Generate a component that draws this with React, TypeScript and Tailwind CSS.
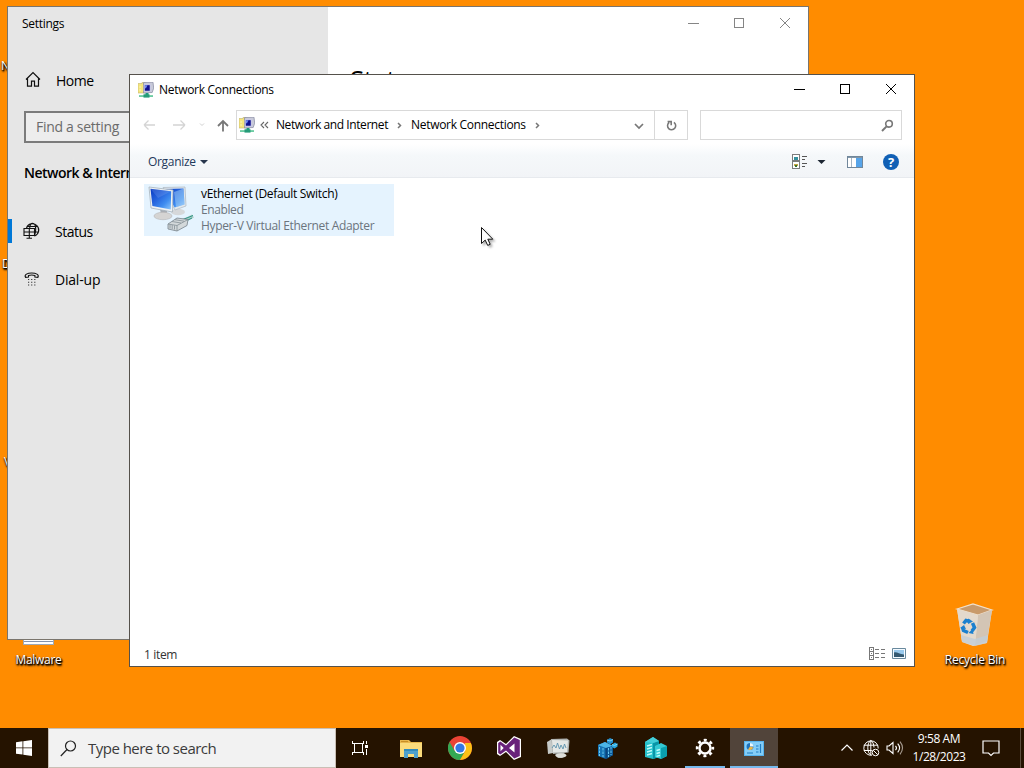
import type { ReactNode } from "react";

const NetworkIcon = () => (
  <svg width="16" height="16" viewBox="0 0 16 16" className="shrink-0">
    <path d="M0 1.500h4V.5h3v10.500H0z" fill="#f5e67c" stroke="#c0b473" strokeWidth=".6" />
    <path d="M1.500 4.500h1.200v1H1.500zM1.500 7.500h1.200v1H1.500z" fill="#fffce0" />
    <path d="M5.500.6l9.500-.4.700 6-1.500 4.300-8.700.5z" fill="#c8cad9" stroke="#84879f" strokeWidth=".7" />
    <path d="M6.300 2.700h5.900v6.500H6.300z" fill="#10108e" stroke="#eef" strokeWidth=".7" />
    <path d="M7 3.200h2.500L8 6.200H7z" fill="#6f8cf5" />
    <path d="M7.500 11h3v2h-3z" fill="#1f9c7e" />
    <path d="M1 13.300h14v1.500H1z" fill="#49c08c" />
    <path d="M5.500 12.300h6v3.300h-6z" fill="#259b78" />
  </svg>
);

const AdapterIcon = () => (
  <svg width="50" height="52" viewBox="0 0 50 52" className="shrink-0">
    <defs>
      <linearGradient id="screen" x1="0" y1="0" x2="1" y2="1">
        <stop offset="0" stopColor="#0a3cc4" />
        <stop offset=".4" stopColor="#2563dd" />
        <stop offset=".7" stopColor="#3f8df0" />
        <stop offset="1" stopColor="#8fc8fb" />
      </linearGradient>
    </defs>
    <ellipse cx="31" cy="28" rx="7" ry="3.200" fill="#d6d8da" />
    <path d="M16 3.500l22-.5 1 19-11 4z" fill="#e2e8ec" stroke="#b3bdc6" strokeWidth=".8" />
    <path d="M18 5l18.500-.5 1 16-10 3z" fill="url(#screen)" />
    <path d="M27 8l9.500-3.500 1 16-8.500 2.500z" fill="#a5d2f8" opacity=".5" />
    <path d="M13 25l7 1.500v4h-6z" fill="#a9aeb4" />
    <ellipse cx="16" cy="32" rx="9" ry="3.700" fill="#d5d4d3" stroke="#b4b4b5" strokeWidth=".6" />
    <path d="M2 3l24 3-.5 22L4 24z" fill="#eef2f5" stroke="#a6b2bd" strokeWidth=".8" />
    <path d="M3.500 4.700L24.200 7.300l-.4 18.200L5.400 22z" fill="url(#screen)" />
    <path d="M3.500 4.700L24.200 7.300 11 14z" fill="#fff" opacity=".12" />
    <path d="M34 37c5-1 9-3 12-5" stroke="#a9cfc8" strokeWidth="3.500" fill="none" />
    <path d="M36 35.500l10-4M37 38l8-4" stroke="#319486" />
    <path d="M21 40l9-6 11 1.500-1 6-10 5.500-9-2z" fill="#d3d8da" stroke="#77828a" strokeWidth=".8" />
    <path d="M21 40l9 1.500 11-6M30 41.500V47M23 40.500v4M25.200 41v4M27.500 41.500v4M25 37.500l9 1.500M28 35.700l9 1.500" stroke="#848f96" strokeWidth=".8" fill="none" />
  </svg>
);

type CaptionProps = { className: string };

const CaptionButtons = ({ className }: CaptionProps) => (
  <div className={"flex " + className}>
    <svg width="46" height="30" viewBox="0 0 46 30" fill="none" stroke="currentColor" shapeRendering="crispEdges">
      <path d="M18 15.500h11" />
    </svg>
    <svg width="46" height="30" viewBox="0 0 46 30" fill="none" stroke="currentColor" shapeRendering="crispEdges">
      <path d="M18.500 10.500h9v9h-9z" />
    </svg>
    <svg width="46" height="30" viewBox="0 0 46 30" fill="none" stroke="currentColor">
      <path d="M18 10l10 10m0-10l-10 10" />
    </svg>
  </div>
);

const HomeIcon = () => (
  <svg width="18" height="18" viewBox="0 0 18 18" fill="none" stroke="#111" strokeWidth="1.200">
    <path d="M2 8.500l7-7 7 7M3.500 7.500v7.700h4v-5h3v5h4V7.500" />
  </svg>
);

const StatusIcon = () => (
  <svg width="18" height="18" viewBox="0 0 18 18" fill="none" stroke="#111" strokeWidth="1.100">
    <path d="M3.500 6A6.300 6.300 0 1 1 11.500 14M6.700 6C7 2.800 8 1.200 9.500 1.200s3.200 2.200 3.200 6.300-.7 5-1.700 6.500M4.200 4.500h10.700M11.500 10h4" />
    <path d="M1 6.500h10.500v7H1zM3.500 16.200H9M6.300 13.500v2.700M6.300 6.500v7M1 10h10.500" />
  </svg>
);

const DialIcon = () => (
  <svg width="18" height="18" viewBox="0 0 18 18" fill="none" stroke="#111" strokeWidth="1.100">
    <path d="M2.500 7.300C1 4.500 4.500 3 8.700 3s7.700 1.500 6.200 4.300l-3-.3V5.500c-1.800-.6-4.600-.6-6.400 0V7z" />
    <path d="M5 9.500h8M5 12.300h8M5 15h8" stroke="#333" strokeDasharray="1.200 1.900" />
  </svg>
);

const Settings = () => (
  <div className="absolute left-[7px] top-[6px] w-[802px] h-[634px] border border-[#7a756d] bg-white flex overflow-hidden">
    <div className="w-80 h-full bg-[#e6e6e6] shrink-0">
      <div className="h-8 pl-[14px] pt-px leading-8 text-xs tracking-[-0.3px]">Settings</div>
      <div className="mt-[33px] h-4 pl-4 flex items-center gap-[14px] text-sm tracking-[-0.5px]">
        <HomeIcon />
        <span className="pt-px">Home</span>
      </div>
      <div className="mt-[23px] ml-4 w-[288px] h-8 border-2 border-[#7b7b7b] bg-[#ededed] pl-[10px] leading-[27px] text-sm text-[#6b6b6b] tracking-[-0.3px]">
        Find a setting
      </div>
      <div className="mt-[20px] ml-4 h-5 leading-5 text-sm font-semibold tracking-[-0.5px]">Network &amp; Internet</div>
      <div className="mt-9 h-6 flex items-center text-sm tracking-[-0.5px]">
        <span className="w-1 h-6 bg-[#0078d7] mr-[11px]" />
        <StatusIcon />
        <span className="ml-[14px] pt-0.5">Status</span>
      </div>
      <div className="mt-6 h-6 pl-[15px] flex items-center gap-[14px] text-sm tracking-[-0.2px]">
        <DialIcon />
        <span className="pt-0.5">Dial-up</span>
      </div>
    </div>
    <div className="grow">
      <div className="flex justify-end pt-px">
        <CaptionButtons className="text-[#858585]" />
      </div>
      <h1 className="mt-[23px] ml-[22px] text-[26px] leading-9 tracking-[-0.5px]">Status</h1>
    </div>
  </div>
);

const AddressBar = () => (
  <div className="mt-[5px] h-[30px] flex items-center pr-3">
    <svg width="106" height="30" viewBox="0 0 106 30" fill="none" className="shrink-0">
      <path d="M14 15h11m-11 0l4.500-4.500M14 15l4.500 4.500M43 15h12m0 0l-4.500-4.500M55 15l-4.500 4.500" stroke="#d4d4d4" strokeWidth="1.300" />
      <path d="M70 13.500l2 2 2-2" stroke="#d0d0d0" />
      <path d="M93 21.500V11m-5 5l5-5 5 5" stroke="#777" strokeWidth="1.800" />
    </svg>
    <div className="w-[452px] h-[30px] border border-[#d9d9d9] flex items-center pl-0.5 shrink-0">
      <NetworkIcon />
      <svg width="21" height="12" viewBox="0 0 21 12" fill="none" stroke="#666" className="shrink-0">
        <path d="M9 3L6 6l3 3M13 3l-3 3 3 3" strokeWidth="1.100" />
      </svg>
      <span className="w-[112px] whitespace-nowrap tracking-[-0.42px]">Network and Internet</span>
      <svg width="23" height="12" viewBox="0 0 23 12" fill="none" stroke="#777" className="shrink-0">
        <path d="M10 4l2.500 2.500L10 9" strokeWidth="1.500" />
      </svg>
      <span className="w-[115px] whitespace-nowrap tracking-[-0.3px]">Network Connections</span>
      <svg width="23" height="12" viewBox="0 0 23 12" fill="none" stroke="#777">
        <path d="M10 4l2.500 2.500L10 9" strokeWidth="1.500" />
      </svg>
      <div className="ml-auto flex">
        <svg width="31" height="28" viewBox="0 0 31 28" fill="none" stroke="#777" strokeWidth="1.700">
          <path d="M12 13l4 4 4-4" />
        </svg>
        <svg width="33" height="28" viewBox="0 0 33 28" fill="none" stroke="#777" strokeWidth="1.600" className="border-l border-[#d9d9d9]">
          <path d="M19.500 11.300a4.200 4.200 0 1 1-5 .2M13 10.500h3.700v3.700" />
        </svg>
      </div>
    </div>
    <div className="ml-3 grow h-[30px] border border-[#d9d9d9] flex justify-end items-center pr-[7px]">
      <svg width="13" height="13" viewBox="0 0 13 13" fill="none" stroke="#777" strokeWidth="1.600">
        <circle cx="8" cy="4.800" r="3.300" />
        <path d="M5.600 7.400L1 12" strokeWidth="2" />
      </svg>
    </div>
  </div>
);

const Toolbar = () => (
  <div className="mt-1 h-[34px] border-b border-[#e7eaee] bg-gradient-to-b from-white via-[#f5f8fa] via-35% to-[#f2f4f7] flex items-center pl-[18px] pr-[15px] pt-0.5 text-[#1e395b]">
    <span className="w-[47px] whitespace-nowrap tracking-[-0.32px]">Organize</span>
    <svg width="17" height="8" viewBox="0 0 17 8">
      <path d="M5 2h8L9 6z" fill="#27364d" />
    </svg>
    <div className="ml-auto flex items-center">
      <svg width="15" height="15" viewBox="0 0 15 15" fill="none" stroke="#7c7c7c" shapeRendering="crispEdges">
        <path d="M.5.500h7v6h-7zM.5 7.500h7v7h-7z" fill="#fff" />
        <path d="M2 4h4" stroke="#35919e" strokeWidth="3" />
        <path d="M2 10.500h4" stroke="#c6a544" strokeWidth="2" />
        <path d="M3 12h2" stroke="#38722e" strokeWidth="2" />
        <path d="M10 2.500h5M10 5.500h3M10 9.500h5M10 12.500h3" stroke="#555" />
      </svg>
      <svg width="28" height="8" viewBox="0 0 28 8">
        <path d="M10.500 2h8l-4 4z" fill="#1c2532" />
      </svg>
      <svg width="16" height="12" viewBox="0 0 16 12" className="ml-3" shapeRendering="crispEdges">
        <path d="M.5.500h15v11H.5z" fill="#fff" stroke="#71879b" />
        <path d="M4.500 1v10" stroke="#a6b5c3" />
        <path d="M9 1h6v10H9z" fill="#57a4e9" />
        <path d="M1 1h14" stroke="#8196a8" />
      </svg>
      <span className="ml-5 size-4 rounded-full bg-[#1160b5] text-white text-[13px] leading-4 font-bold text-center">?</span>
    </div>
  </div>
);

const NetworkConnections = () => (
  <div className="absolute left-[129px] top-[74px] w-[786px] h-[593px] border border-[#55514b] bg-white text-xs flex flex-col">
    <div className="h-[30px] flex items-center pl-2">
      <NetworkIcon />
      <span className="ml-[5px] tracking-[-0.3px]">Network Connections</span>
      <CaptionButtons className="ml-auto -mt-0.5 text-black" />
    </div>
    <AddressBar />
    <Toolbar />
    <div className="mt-1.5 ml-[14px] w-[250px] h-[52px] bg-[#e5f3fe] flex pl-[3px] gap-1">
      <AdapterIcon />
      <div className="leading-4 pt-0.5 whitespace-nowrap text-[#6b747d]">
        <div className="text-black tracking-[-0.32px]">vEthernet (Default Switch)</div>
        <div className="tracking-[-0.4px]">Enabled</div>
        <div className="tracking-[-0.33px]">Hyper-V Virtual Ethernet Adapter</div>
      </div>
    </div>
    <div className="mt-auto h-[23px] flex items-center pl-[14px] pr-2 text-[#333]">
      <span className="tracking-[-0.35px]">1 item</span>
      <svg width="17" height="13" viewBox="0 0 17 13" fill="none" stroke="#777" className="ml-auto mb-0.5" shapeRendering="crispEdges">
        <path d="M.5.500h4v12h-4zM1 4.500h3M1 8.500h3M2 2.500h1M2 6.500h1M2 10.500h1M6 2.500h4M12 2.500h4M6 6.500h4M12 6.500h4M6 10.500h4M12 10.500h4" />
      </svg>
      <svg width="14" height="12" viewBox="0 0 14 12" className="ml-1.5 mb-0.5">
        <path d="M.5.500h13v10H.5z" fill="#f4faff" stroke="#68899d" />
        <path d="M2 2h10v7H2z" fill="#98c9ed" />
        <path d="M2 4.500c3-1 5 2 10 2V9H2z" fill="#345971" />
      </svg>
    </div>
  </div>
);

const RecycleBin = () => (
  <div className="absolute left-[935px] top-[602px] w-20 flex flex-col items-center">
    <svg width="42" height="46" viewBox="0 0 42 46">
      <path d="M3 7l16-5 19 6-5 33-14 3-11-4z" fill="#e3dcd1" />
      <path d="M3 7l16-5 19 6-14 5z" fill="#c89a6b" stroke="#f2dfc8" strokeWidth="1.200" />
      <path d="M24 13l14-5-5 31-12 4z" fill="#d3c5b5" />
      <path d="M3 7l21 6-3 30-13-4z" fill="#e4d9cc" />
      <path d="M7 33l14 4 13-4-1 8-12 3-13-4z" fill="#c3cdd6" opacity=".8" />
      <g fill="none" stroke="#1b80cf" strokeWidth="3.500">
        <path d="M9.500 21.500l2.500-3 4 1M18.500 21l2 4.500-2.500 3.500M14 30.500l-4.500-2-1-3" />
      </g>
      <path d="M14 16.500l5 3-5 2.500zM19.500 32l-5-1 4-4zM6 26l4-3 2 4z" fill="#1b80cf" />
    </svg>
    <span className="mt-0.5 h-5 leading-5 text-xs text-white whitespace-nowrap tracking-[-0.2px] [text-shadow:1px_1px_1px_#000,0_1px_2px_#000,1px_2px_2px_#000]">
      Recycle Bin
    </span>
  </div>
);

const Desktop = () => (
  <div className="text-xs text-white [text-shadow:1px_1px_1px_#000,0_1px_2px_#000,1px_2px_2px_#000]">
    <span className="absolute left-px top-[58px]">N</span>
    <span className="absolute left-[2px] top-[256px]">D</span>
    <span className="absolute left-[4px] top-[454px]">V</span>
    <div className="absolute left-0 top-[610px] w-[77px] flex flex-col items-center">
      <div className="w-[31px] h-[35px] bg-white border border-[#9fa9b5] flex items-end pb-[2px]">
        <span className="w-full h-px bg-[#8494ae]" />
      </div>
      <span className="mt-[5px] h-5 leading-5 tracking-[-0.3px]">Malware</span>
    </div>
  </div>
);

type TaskProps = { children: ReactNode; className?: string };

const Task = ({ children, className = "" }: TaskProps) => (
  <div className={"relative w-12 h-10 mr-px flex items-center justify-center " + className}>{children}</div>
);

const Taskbar = () => (
  <div className="absolute left-0 top-[728px] w-full h-10 bg-[#251300] text-white flex overflow-hidden">
    <div className="w-12 flex items-center justify-center">
      <svg width="16" height="16" viewBox="0 0 16 16" fill="#fff">
        <path d="M0 2.200l6.500-.9v6.200H0zM7.300 1.200L16 0v7.500H7.300zM0 8.300h6.500v6.300L0 13.700zM7.300 8.300H16V16l-8.700-1.200z" />
      </svg>
    </div>
    <div className="w-[288px] h-10 bg-[#f2f2f2] border border-[#c9bfb5] flex items-center pl-[11px] text-[#3b3b3b] text-[15px]">
      <svg width="17" height="17" viewBox="0 0 17 17" fill="none" stroke="#222" strokeWidth="1.200">
        <circle cx="10.500" cy="6" r="5" />
        <path d="M7 9.500L.8 16" />
      </svg>
      <span className="ml-[11px] tracking-[-0.52px]">Type here to search</span>
    </div>
    <Task>
      <svg width="16" height="16" viewBox="0 0 16 16" fill="none" stroke="#fff" shapeRendering="crispEdges">
        <path d="M.5 1v2.500h11V1M.5 15v-2.500h11V15M2.500 3.500v9M10.500 3.500v9M14.500 1v3M14.500 9v6" />
        <path d="M13 5h3v3h-3z" fill="#fff" stroke="none" />
      </svg>
    </Task>
    <Task className="ml-0.5">
      <svg width="22" height="19" viewBox="0 0 22 19">
        <path d="M0 1h9l2 2h11v15H0z" fill="#e8b64c" />
        <path d="M0 4h22v14H0z" fill="#fbdb7b" />
        <path d="M1 2h7v1H1z" fill="#c88e26" />
        <path d="M4 10h14v9h-4v-4H8v4H4z" fill="#4fa0cc" />
        <path d="M4 10h14v2H4z" fill="#318abb" />
      </svg>
    </Task>
    <Task>
      <svg width="24" height="24" viewBox="0 0 24 24">
        <circle cx="12" cy="12" r="12" fill="#ea4335" />
        <path d="M1.600 6a12 12 0 0 0 10.400 18l5.200-9-10.400 0z" fill="#34a853" />
        <path d="M22.900 7A12 12 0 0 1 12 24l5.200-9L17 7z" fill="#fbc116" />
        <circle cx="12" cy="12" r="6" fill="#fff" />
        <circle cx="12" cy="12" r="4.600" fill="#3478e5" />
      </svg>
    </Task>
    <Task>
      <svg width="24" height="24" viewBox="0 0 24 24">
        <path d="M17 0l7 3v18l-7 3-8-8-6 4-3-2V6l3-2 6 4z" fill="#fff" />
        <path d="M17.300 1.500L22.800 4v16l-5.500 2.500-8.300-8-5.700 4L1.200 17V7l2.100-1.500 5.700 4z" fill="#68217a" />
        <path d="M17.500 7.500v9L12 12zM3.500 8.800v6.400L6.700 12z" fill="#fff" />
      </svg>
    </Task>
    <Task>
      <svg width="23" height="22" viewBox="0 0 23 22">
        <path d="M0 5l5-3 1 14-5 1z" fill="#c6cac8" />
        <path d="M4 2l16-.5 2.500 2-1 12L6 17z" fill="#b1b5b3" />
        <path d="M5 3l16 .5-1 11.500-14 .5z" fill="#e4e7e5" />
        <path d="M5 11l2-3 2 3 1.500-5 2 6 1.500-4 2 4 1.500-5 1.500 4" fill="none" stroke="#5d93ae" strokeWidth=".9" />
        <path d="M10 16h7l2 2-4 3h-4l-3-3z" fill="#a9adab" />
        <ellipse cx="14" cy="18.500" rx="5.500" ry="2.200" fill="#deded9" />
      </svg>
    </Task>
    <Task>
      <svg width="21" height="22" viewBox="0 0 21 22">
        <path d="M1 8l7-3 8 4v9l-7 4-8-3z" fill="#1674b5" />
        <path d="M1 8l7-3 8 4-7 2z" fill="#4cb5e6" />
        <path d="M9 11l7-2v9l-7 4z" fill="#0c5796" />
        <path d="M2.500 10v9M6 11v9M11.500 11v9M14 10v8" stroke="#6cc9ef" strokeDasharray="2.500 1" fill="none" />
        <path d="M9 11v11" stroke="#0a3768" fill="none" />
        <path d="M10 3l3-2 3 1.500v3l-3 2-3-2z" fill="#238fce" />
        <path d="M15 7.500l3-2 2.500 1.500v2.500l-3 2-2.500-1.500z" fill="#28a8e1" />
        <path d="M10 3l3 1 3-1.500M15 7.500l2.500 1 3-1.500" stroke="#7ed4f5" fill="none" />
      </svg>
    </Task>
    <Task>
      <svg width="22" height="22" viewBox="0 0 22 22">
        <path d="M0 5l8-5 6 4v16l-6 2-8-2z" fill="#24bfca" />
        <path d="M8 6l6-2v16l-6 2z" fill="#0995a7" />
        <path d="M0 5l8-5 6 4-6 2z" fill="#45ced8" />
        <path d="M10 9l6-3 6 3v10l-6 3-6-2z" fill="#33c9d3" />
        <path d="M16 11l6-2v10l-6 3z" fill="#0a9fae" />
        <path d="M2 9l5-1.500M2 12l5-1.500M2 15l5-1.500M2 18l5-1.500M11.500 13.500l3.500-1M11.500 16.500l3.500-1M11.500 19.300l3.500-1" stroke="#bffcfb" strokeWidth="1.400" />
      </svg>
    </Task>
    <Task>
      <svg width="20" height="20" viewBox="0 0 20 20" fill="none" stroke="#fff">
        <circle cx="10" cy="10" r="5.500" strokeWidth="2.500" />
        <circle cx="10" cy="10" r="7.900" strokeWidth="2.600" strokeDasharray="3 3.205" strokeDashoffset="1.500" />
      </svg>
      <span className="absolute bottom-0 left-1 w-10 h-0.5 bg-[#76b9ed]" />
    </Task>
    <Task className="bg-[#51443a]">
      <svg width="20" height="15" viewBox="0 0 20 15">
        <path d="M0 0h20v15H0z" fill="#55b3ee" />
        <path d="M1 1h18v13H1z" fill="#84cdf7" />
        <circle cx="6" cy="5.500" r="3.200" fill="#eef8fd" />
        <path d="M6 5.500V2a3.500 3.500 0 1 0 3.500 3.500z" fill="#1c72bc" />
        <path d="M6 5.500l3.300 1A3.500 3.500 0 0 1 4 8.400z" fill="#e9b64a" />
        <path d="M12 5h2.500M12 8h2.500M12 11h2.500M16.500 3v9M3 12h6" stroke="#1f7dc2" strokeWidth="1.200" />
      </svg>
      <span className="absolute bottom-0 left-0 w-12 h-0.5 bg-[#76b9ed]" />
    </Task>
    <div className="ml-auto flex items-center text-xs">
      <svg width="14" height="16" viewBox="0 0 14 16" fill="none" stroke="#fff" strokeWidth="1.200">
        <path d="M1.500 10.500L7 5l5.500 5.500" />
      </svg>
      <svg width="18" height="18" viewBox="0 0 18 18" fill="none" stroke="#fff" className="ml-2">
        <path d="M10 16.200a7.200 7.200 0 1 1 6.200-6.700M8.800 16c-4-2-4-12.500 0-14.500 2 1 3 3.500 3.200 7M1.800 6.200h14.200M1.800 11.500h8M8.800 1.500V16" />
        <circle cx="13.500" cy="13.500" r="3.300" fill="#251300" />
        <path d="M11.200 11.200l4.600 4.600" />
      </svg>
      <svg width="18" height="16" viewBox="0 0 18 16" fill="none" stroke="#fff" strokeWidth="1.100" className="ml-1.5">
        <path d="M1 6h2l4-3.500v11L3 10H1zM9.500 5.800q2 2.200 0 4.400M11.700 3.700q3.800 4.300 0 8.600" />
        <path d="M14 1.700q5 6.300 0 12.600" stroke="#a79c90" />
      </svg>
      <div className="w-[70px] text-center leading-[18px] tracking-[-0.42px] whitespace-nowrap">
        <div>9:58 AM</div>
        <div>1/28/2023</div>
      </div>
      <svg width="18" height="18" viewBox="0 0 18 18" fill="none" stroke="#fff" strokeWidth="1.200" className="ml-2">
        <path d="M1 2h16v12h-5.500L9 16.500 6.500 14H1z" />
      </svg>
      <span className="ml-5 mr-[3px] w-px h-10 bg-[#5c4d3d]" />
    </div>
  </div>
);

export default function App() {
  return (
    <main className="relative w-[1024px] h-[768px] overflow-hidden bg-[#ff8c00] text-black font-['Open_Sans',sans-serif]">
      <Desktop />
      <RecycleBin />
      <Settings />
      <NetworkConnections />
      <Taskbar />
      {/* mouse pointer */}
      <svg width="16" height="22" viewBox="0 0 16 22" className="absolute left-[480px] top-[226px] drop-shadow-[2px_2px_1px_rgba(0,0,0,.3)]">
        <path d="M1.500 1.500v16l3.700-3.400 2.500 5.300 2.500-1.100-2.400-5.100h5z" fill="#fff" stroke="#111" />
      </svg>
    </main>
  );
}
